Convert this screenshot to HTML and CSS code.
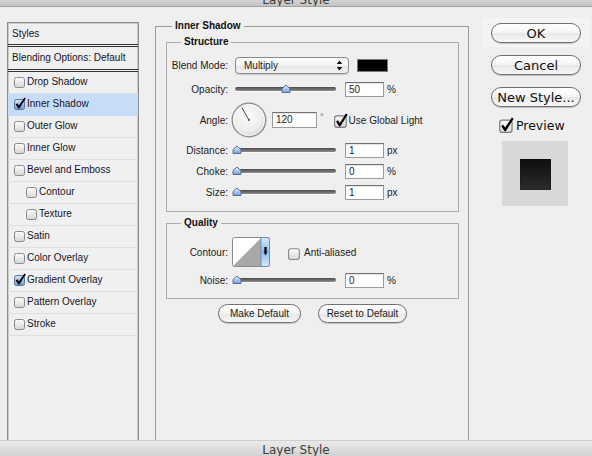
FILE: index.html
```html
<!DOCTYPE html>
<html>
<head>
<meta charset="utf-8">
<title>Layer Style</title>
<link rel="stylesheet" href="styles.css">
</head>
<body>
<svg class="defs" aria-hidden="true" focusable="false">
  <defs>
    <linearGradient id="gBox" x1="0" y1="0" x2="0" y2="1">
      <stop offset="0" stop-color="#fdfdfd"/>
      <stop offset="1" stop-color="#d6d6d6"/>
    </linearGradient>
    <linearGradient id="gBlue" x1="0" y1="0" x2="0" y2="1">
      <stop offset="0" stop-color="#d6e5f8"/>
      <stop offset="1" stop-color="#6f9bd6"/>
    </linearGradient>
    <linearGradient id="gThumb" x1="0" y1="0" x2="0" y2="1">
      <stop offset="0" stop-color="#eef5fd"/>
      <stop offset="1" stop-color="#6e9ddb"/>
    </linearGradient>
    <radialGradient id="gDial" cx="0.45" cy="0.38" r="0.65">
      <stop offset="0" stop-color="#fcfcfc"/>
      <stop offset="0.7" stop-color="#ececec"/>
      <stop offset="1" stop-color="#d0d0d0"/>
    </radialGradient>
    <linearGradient id="gStrip" x1="0" y1="0" x2="0" y2="1">
      <stop offset="0" stop-color="#d9e8fc"/>
      <stop offset="0.5" stop-color="#8dbcf2"/>
      <stop offset="1" stop-color="#d4e6fc"/>
    </linearGradient>
    <symbol id="ck-off" viewBox="0 0 12 13">
      <rect x="0.5" y="2.5" width="10" height="10" rx="2" fill="url(#gBox)" stroke="#8a8a8a"/>
    </symbol>
    <symbol id="ck-on" viewBox="0 0 12 13">
      <rect x="0.5" y="2.5" width="10" height="10" rx="2" fill="url(#gBox)" stroke="#7d7d7d"/>
      <path d="M1.7 7.4 L3.4 6.2 L4.9 8.6 L10.3 0.4 L11.8 1.4 L5.4 11.6 L4.4 11.6 Z" fill="#000"/>
    </symbol>
    <symbol id="ck-blue" viewBox="0 0 12 13">
      <rect x="0.5" y="2.5" width="10" height="10" rx="2" fill="url(#gBlue)" stroke="#5d7698"/>
      <path d="M1.7 7.4 L3.4 6.2 L4.9 8.6 L10.3 0.4 L11.8 1.4 L5.4 11.6 L4.4 11.6 Z" fill="#000"/>
    </symbol>
    <symbol id="thumb" viewBox="0 0 10 9">
      <path d="M1 8.5 V4.6 L5 1 L9 4.6 V8.5 Z" fill="url(#gThumb)" stroke="#56708f" stroke-linejoin="round"/>
    </symbol>
  </defs>
</svg>

<div class="window">
  <div class="bar bar-top"><span class="bar-title">Layer Style</span></div>

  <div class="main">
    <div class="styles">
      <div class="st-head">Styles</div>
      <div class="st-blend">Blending Options: Default</div>
      <ul class="st-list">
        <li><svg class="ck"><use href="#ck-off"/></svg>Drop Shadow</li>
        <li class="sel"><svg class="ck"><use href="#ck-blue"/></svg>Inner Shadow</li>
        <li><svg class="ck"><use href="#ck-off"/></svg>Outer Glow</li>
        <li><svg class="ck"><use href="#ck-off"/></svg>Inner Glow</li>
        <li><svg class="ck"><use href="#ck-off"/></svg>Bevel and Emboss</li>
        <li class="sub"><svg class="ck"><use href="#ck-off"/></svg>Contour</li>
        <li class="sub"><svg class="ck"><use href="#ck-off"/></svg>Texture</li>
        <li><svg class="ck"><use href="#ck-off"/></svg>Satin</li>
        <li><svg class="ck"><use href="#ck-off"/></svg>Color Overlay</li>
        <li><svg class="ck"><use href="#ck-blue"/></svg>Gradient Overlay</li>
        <li><svg class="ck"><use href="#ck-off"/></svg>Pattern Overlay</li>
        <li><svg class="ck"><use href="#ck-off"/></svg>Stroke</li>
      </ul>
    </div>

    <fieldset class="effect">
      <legend>Inner Shadow</legend>

      <fieldset class="group structure">
        <legend>Structure</legend>
        <div class="row r-blend">
          <span class="lbl">Blend Mode:</span>
          <div class="select">
            <span>Multiply</span>
            <svg class="updown" viewBox="0 0 7 11" width="7" height="11"><path d="M3.5 0.5 L6.3 4 H0.7 Z M0.7 7 H6.3 L3.5 10.5 Z" fill="#111"/></svg>
          </div>
          <span class="swatch"></span>
        </div>
        <div class="row r-opacity">
          <span class="lbl">Opacity:</span>
          <div class="slider" style="--v:0.5"><div class="track"></div><svg class="thumb"><use href="#thumb"/></svg></div>
          <span class="field">50</span><span class="unit">%</span>
        </div>
        <div class="row r-angle">
          <span class="lbl">Angle:</span>
          <svg class="dial" viewBox="0 0 36 36" width="36" height="36">
            <circle cx="18" cy="18" r="16.8" fill="url(#gDial)" stroke="#8b8b8b" stroke-width="1.3"/>
            <circle cx="18" cy="18" r="15.4" fill="none" stroke="#ffffff" stroke-opacity="0.7"/>
            <line x1="18" y1="18" x2="10.8" y2="5.6" stroke="#4a4a4a" stroke-width="1"/>
            <circle cx="18" cy="18" r="1.1" fill="#555"/>
          </svg>
          <span class="field field-angle">120</span>
          <span class="deg">°</span>
          <span class="gl"><svg class="ck-md"><use href="#ck-on"/></svg>Use Global Light</span>
        </div>
        <div class="row r-dist">
          <span class="lbl">Distance:</span>
          <div class="slider" style="--v:0"><div class="track"></div><svg class="thumb"><use href="#thumb"/></svg></div>
          <span class="field">1</span><span class="unit">px</span>
        </div>
        <div class="row r-choke">
          <span class="lbl">Choke:</span>
          <div class="slider" style="--v:0"><div class="track"></div><svg class="thumb"><use href="#thumb"/></svg></div>
          <span class="field">0</span><span class="unit">%</span>
        </div>
        <div class="row r-size">
          <span class="lbl">Size:</span>
          <div class="slider" style="--v:0"><div class="track"></div><svg class="thumb"><use href="#thumb"/></svg></div>
          <span class="field">1</span><span class="unit">px</span>
        </div>
      </fieldset>

      <fieldset class="group quality">
        <legend>Quality</legend>
        <div class="row r-contour">
          <span class="lbl">Contour:</span>
          <svg class="contour" viewBox="0 0 38 30" width="38" height="30">
            <rect x="0.5" y="0.5" width="37" height="29" rx="2" fill="#ffffff" stroke="#8a8a8a"/>
            <polygon points="1,29 29,1 29,29" fill="#a8a8a8"/>
            <path d="M29 0.5 H35.5 Q37.5 0.5 37.5 2.5 V27.5 Q37.5 29.5 35.5 29.5 H29 Z" fill="url(#gStrip)" stroke="#6f8fbd"/>
            <path d="M32.4 10 H34.6 V14.5 H35.5 L33.5 18.5 L31.5 14.5 H32.4 Z" fill="#000"/>
          </svg>
          <span class="aa"><svg class="ck-sm"><use href="#ck-off"/></svg>Anti-aliased</span>
        </div>
        <div class="row r-noise">
          <span class="lbl">Noise:</span>
          <div class="slider" style="--v:0"><div class="track"></div><svg class="thumb"><use href="#thumb"/></svg></div>
          <span class="field">0</span><span class="unit">%</span>
        </div>
      </fieldset>

      <div class="defaults">
        <button class="btn btn-make">Make Default</button>
        <button class="btn btn-reset">Reset to Default</button>
      </div>
    </fieldset>

    <div class="actions">
      <div class="ok-wrap"><button class="btn-lg">OK</button></div>
      <button class="btn-lg btn-cancel">Cancel</button>
      <button class="btn-lg btn-new">New Style...</button>
      <span class="preview-cb"><svg class="ck-lg"><use href="#ck-on"/></svg>Preview</span>
      <div class="preview"><div class="preview-sq"></div></div>
    </div>
  </div>

  <div class="bar bar-bottom"><span class="bar-title">Layer Style</span></div>
</div>
</body>
</html>
```

FILE: styles.css
```css
* { box-sizing: border-box; }
html, body { margin: 0; padding: 0; }
body {
  width: 592px;
  height: 456px;
  overflow: hidden;
  background: #efefef;
  font-family: "Liberation Sans", Arial, sans-serif;
  font-size: 10px;
  color: #1c1c1c;
}
.defs { position: absolute; width: 0; height: 0; overflow: hidden; }

.window { display: flex; flex-direction: column; height: 456px; }

/* title bars */
.bar {
  overflow: hidden;
  text-align: center;
  font-family: "DejaVu Sans", sans-serif;
  font-size: 12px;
  line-height: 16px;
  color: #3c3c3c;
  flex: none;
}
.bar-title { display: block; }
.bar-top {
  height: 7px;
  background: linear-gradient(#d4d4d4, #c3c3c3);
  border-bottom: 1px solid #a2a2a2;
}
.bar-top .bar-title { margin-top: -8px; }
.bar-bottom {
  height: 16px;
  background: linear-gradient(#eaeaea, #d2d2d2);
  border-top: 1px solid #cfcfcf;
}
.bar-bottom .bar-title { padding-top: 1px; }

.main { display: flex; align-items: flex-start; height: 433px; flex: none; }

/* styles list */
.styles {
  margin: 15px 0 0 7px;
  width: 132px;
  height: 418px;
  border: 1px solid #8c8c8c;
  border-bottom: none;
  box-shadow: inset 1px 1px 0 #cacaca, inset -1px 0 0 #cacaca;
  background: #f0f0f0;
  flex: none;
}
.st-head, .st-blend {
  padding-left: 4px;
  border-bottom: 3px double #333;
  color: #15152a;
}
.st-head { height: 24px; line-height: 21px; }
.st-blend { height: 25px; line-height: 22px; }
.st-list { list-style: none; margin: 0; padding: 0; }
.st-list li {
  display: flex;
  align-items: center;
  height: 22px;
  padding: 0 0 2px 6px;
  border-bottom: 1px solid #dfdfdf;
  color: #15152a;
}
.st-list li.sel { background: #c6dcf8; border-bottom-color: #c6dcf8; }
.st-list li.sub { padding-left: 18px; }
.ck { width: 12px; height: 13px; margin-right: 1px; flex: none; }

/* effect panel */
.effect {
  margin: 13px 0 0 16px;
  width: 314px;
  height: 420px;
  min-width: 0;
  padding: 0 9px 0 10px;
  border: 1px solid #9a9a9a;
  border-bottom: none;
  flex: none;
}
.effect > legend {
  margin-left: 6px;
  padding: 0 3px;
  font-weight: bold;
  line-height: 12px;
  color: #111;
}
.group {
  margin: 4px 0 0;
  min-width: 0;
  padding: 0;
  border: 1px solid #adadad;
}
.group > legend {
  margin-left: 14px;
  padding: 0 3px;
  font-weight: bold;
  line-height: 12px;
  color: #111;
}
.structure { padding-bottom: 10px; }
.quality { margin-top: 5px; padding-bottom: 9px; }

.row { display: flex; align-items: center; }
.lbl { width: 61px; margin-right: 7px; text-align: right; flex: none; }
.r-blend { margin-top: 8px; height: 19px; }
.r-opacity { margin-top: 5px; height: 18px; }
.r-angle { margin-top: 3px; height: 38px; }
.r-dist { margin-top: 2px; height: 18px; }
.r-choke, .r-size { margin-top: 3px; height: 18px; }
.r-contour { margin-top: 8px; height: 30px; }
.r-noise { margin-top: 4px; height: 18px; }

.select {
  width: 114px;
  height: 17px;
  flex: none;
  display: flex;
  align-items: center;
  justify-content: space-between;
  padding: 0 5px 0 8px;
  border: 1px solid #8a8a8a;
  border-radius: 4px;
  background: linear-gradient(#fefefe, #f3f3f3 50%, #e4e4e4 51%, #f4f4f4);
  box-shadow: 0 1px 1px rgba(0,0,0,.15);
}
.updown { flex: none; }
.swatch {
  width: 31px;
  height: 13px;
  margin-left: 8px;
  background: #000;
  border: 1px solid #7a7a7a;
  flex: none;
}

.slider { position: relative; width: 101px; height: 10px; flex: none; }
.track {
  margin-top: 3px;
  height: 4px;
  border-radius: 2px;
  background: linear-gradient(#4b4b4b, #8e8e8e);
  box-shadow: 0 1px 0 #fafafa;
}
.thumb {
  position: absolute;
  top: 0;
  left: calc(var(--v) * 98px - 3px);
  width: 10px;
  height: 9px;
}

.field {
  width: 39px;
  height: 15px;
  margin-left: 9px;
  padding-left: 3px;
  line-height: 13px;
  background: #fff;
  border: 1px solid #9b9b9b;
  border-top-color: #707070;
  box-shadow: inset 0 1px 1px rgba(0,0,0,.12);
  flex: none;
}
.unit { margin-left: 3px; }

.dial { margin-left: -4px; flex: none; }
.field-angle { width: 45px; height: 16px; margin-left: 5px; line-height: 14px; }
.deg { margin: 0 0 7px 3px; font-size: 9px; color: #666; }
.gl { display: flex; align-items: center; margin-left: 10px; }
.ck-md { width: 14px; height: 15px; margin-right: 1px; flex: none; }

.contour { margin-left: -3px; flex: none; }
.aa { display: flex; align-items: center; margin-left: 18px; margin-top: 1px; }
.ck-sm { width: 13px; height: 14px; margin-right: 3px; flex: none; }

.defaults { display: flex; justify-content: center; gap: 17px; margin-top: 5px; }
.btn {
  height: 19px;
  padding: 0;
  font-family: inherit;
  font-size: 10px;
  color: #1a1a1a;
  border: 1px solid #727272;
  border-radius: 10px;
  background: linear-gradient(#ffffff, #f4f4f4 50%, #e6e6e6 51%, #f8f8f8);
  box-shadow: 0 1px 1px rgba(0,0,0,.18);
}
.btn-make { width: 83px; }
.btn-reset { width: 89px; }

/* right column */
.actions {
  margin: 11px 0 0 22px;
  width: 90px;
  display: flex;
  flex-direction: column;
  flex: none;
}
.ok-wrap {
  margin: 0 -9px;
  padding: 5px 9px 4px;
  background: #f4f4f4;
}
.btn-lg {
  width: 90px;
  height: 20px;
  padding: 0;
  font-family: "DejaVu Sans", sans-serif;
  font-size: 13px;
  color: #111;
  border: 1px solid #6e6e6e;
  border-radius: 10px;
  background: linear-gradient(#ffffff, #f5f5f5 50%, #e7e7e7 51%, #f9f9f9);
  box-shadow: 0 1px 1px rgba(0,0,0,.2);
}
.btn-cancel { margin-top: 8px; }
.btn-new { margin-top: 12px; }
.preview-cb {
  display: flex;
  align-items: center;
  margin: 10px 0 0 8px;
  font-family: "DejaVu Sans", sans-serif;
  font-size: 12.5px;
  color: #111;
}
.ck-lg { width: 15px; height: 16px; margin-right: 2px; flex: none; }
.preview {
  margin: 8px 0 0 11px;
  width: 66px;
  height: 65px;
  padding: 18px 0 0 18px;
  background: #d8d8d8;
}
.preview-sq {
  width: 31px;
  height: 31px;
  background: linear-gradient(#0e0e0e, #2c2c2c);
  box-shadow: inset 0 0 1px #000;
}
```
